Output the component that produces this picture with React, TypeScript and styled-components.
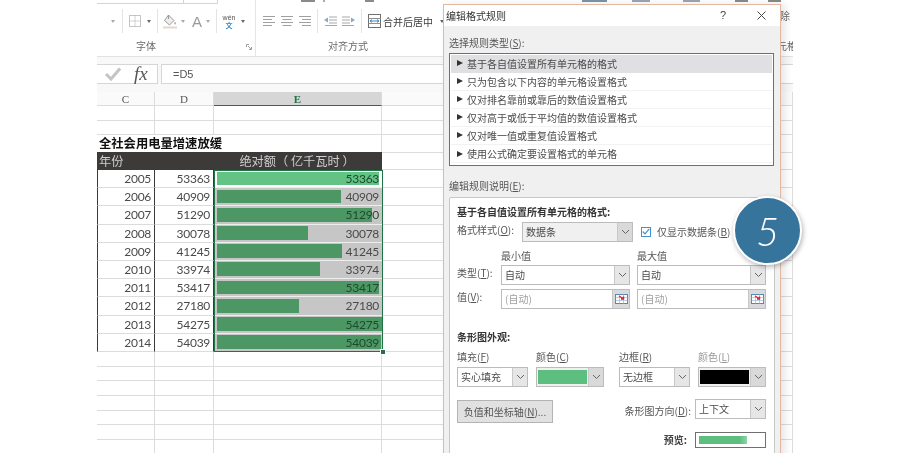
import React from "react";
import styled, { createGlobalStyle } from "styled-components";

const GlobalStyle = createGlobalStyle`
    html, body {
        margin: 0;
        padding: 0;
        background: #fff;
    }
    * {
        box-sizing: border-box;
    }
`;

const CJK = `"Noto Sans CJK SC", "Liberation Sans", sans-serif`;

const Page = styled.div`
    width: 900px;
    height: 453px;
    position: relative;
    overflow: hidden;
    background: #fff;
    padding-left: 97px;
    font-family: ${CJK};
    color: #444;
    filter: blur(0.25px);
`;
const Excel = styled.div`
    width: 696px;
    height: 453px;
    display: flex;
    flex-direction: column;
    overflow: hidden;
`;

/* ribbon */
const Ribbon = styled.div`
    height: 56.5px;
    flex: none;
    display: flex;
    border-bottom: 1.5px solid #e2e2e2;
    background: #fff;
`;
const Group = styled.div<{ $w: number; $line?: boolean }>`
    width: ${(p) => p.$w}px;
    flex: none;
    position: relative;
    display: flex;
    flex-direction: column;
    border-right: ${(p) => (p.$line ? "1px solid #e6e6e6" : "none")};
`;
const TopStrip = styled.div`
    height: 5px;
    flex: none;
    display: flex;
    align-items: flex-start;
    overflow: hidden;
`;
const ComboStub = styled.div<{ $w: number }>`
    width: ${(p) => p.$w}px;
    height: 4px;
    border-bottom: 1px solid #d4d4d4;
    border-right: 1px solid #d4d4d4;
`;
const StubMark = styled.div<{ $ml: number; $w: number; $c?: string }>`
    margin-left: ${(p) => p.$ml}px;
    width: ${(p) => p.$w}px;
    height: 2px;
    background: ${(p) => p.$c ?? "#8a8a8a"};
`;
const IconRow = styled.div`
    height: 32px;
    flex: none;
    display: flex;
    align-items: center;
`;
const GroupLabel = styled.div<{ $pr: number }>`
    height: 18px;
    line-height: 18px;
    padding-right: ${(p) => p.$pr}px;
    font-size: 10px;
    text-align: center;
    color: #6a6a6a;
`;
const Tool = styled.div<{ $ml?: number }>`
    margin-left: ${(p) => p.$ml ?? 0}px;
    display: flex;
    align-items: center;
    flex: none;
`;
const Caret = styled.div<{ $ml: number; $c?: string }>`
    margin-left: ${(p) => p.$ml}px;
    flex: none;
    width: 0;
    height: 0;
    border-left: 2.5px solid transparent;
    border-right: 2.5px solid transparent;
    border-top: 3px solid ${(p) => p.$c ?? "#666"};
`;
const ToolSep = styled.div<{ $ml: number }>`
    margin-left: ${(p) => p.$ml}px;
    width: 1px;
    height: 24px;
    background: #e4e4e4;
    flex: none;
`;
const UnderlineU = styled.div`
    width: 8px;
    font: 13px "Liberation Sans", sans-serif;
    color: #8a8a8a;
    text-decoration: underline;
    line-height: 14px;
    margin-left: -1px;
`;
const LetterA = styled.div`
    font: 15px "Liberation Sans", sans-serif;
    color: #9a9a9a;
`;
const Phonetic = styled.div`
    width: 14px;
    display: flex;
    flex-direction: column;
    align-items: center;
    line-height: 8px;
`;
const PhoneticTop = styled.span`
    font: 7px "Liberation Sans", sans-serif;
    color: #555;
`;
const PhoneticBottom = styled.span`
    font-size: 7px;
    font-weight: 700;
    color: #3f86c4;
`;
const MergeText = styled.div`
    margin-left: 2px;
    font-size: 10px;
    color: #3c3c3c;
    white-space: nowrap;
`;
const Launcher = styled.div`
    position: absolute;
    right: 3px;
    bottom: 1px;
`;
const ClippedGroup = styled.div`
    margin-left: auto;
    width: 12px;
    flex: none;
    display: flex;
    flex-direction: column;
    align-items: flex-end;
    overflow: hidden;
    font-size: 10px;
    color: #666;
    white-space: nowrap;
`;
const ClippedTop = styled.div`
    margin-top: 9px;
    height: 14px;
    line-height: 14px;
    padding-right: 3px;
`;
const ClippedLabel = styled.div`
    margin-top: 16px;
    height: 14px;
    line-height: 14px;
    margin-right: -4px;
`;

/* formula bar */
const FormulaBar = styled.div`
    height: 35.5px;
    flex: none;
    display: flex;
    align-items: center;
    gap: 3px;
    padding-bottom: 1px;
    background: #f8f8f8;
`;
const FxBox = styled.div`
    width: 61px;
    height: 20px;
    flex: none;
    display: flex;
    align-items: center;
    padding-left: 8px;
    background: #fff;
    border: 1px solid #d6d6d6;
    border-left: none;
`;
const FxText = styled.span`
    margin-left: 13px;
    font: italic 400 19px "Liberation Serif", serif;
    line-height: 18px;
    color: #555;
`;
const FormulaInput = styled.div`
    flex: 1;
    height: 20px;
    display: flex;
    align-items: center;
    padding-left: 11px;
    background: #fff;
    border: 1px solid #d6d6d6;
    border-right: none;
    font: 11px "Liberation Sans", sans-serif;
    color: #555;
`;

/* sheet */
const COLUMNS = "58px 59px 168px 1fr";
const Sheet = styled.div`
    flex: 1;
    display: flex;
    flex-direction: column;
`;
const HeaderRow = styled.div`
    height: 14px;
    flex: none;
    display: grid;
    grid-template-columns: ${COLUMNS};
    background: #fafafa;
`;
const ColHead = styled.div<{ $active?: boolean }>`
    display: flex;
    align-items: center;
    justify-content: center;
    font: ${(p) => (p.$active ? 700 : 400)} 11px "Liberation Serif", serif;
    color: ${(p) => (p.$active ? "#217346" : "#555")};
    background: ${(p) => (p.$active ? "#d6d6d6" : "transparent")};
    border-right: 1px solid #dcdcdc;
    border-bottom: ${(p) => (p.$active ? "1.5px solid #217346" : "1px solid #dcdcdc")};
`;
const Row = styled.div<{ $h: number }>`
    height: ${(p) => p.$h}px;
    flex: none;
    display: grid;
    grid-template-columns: ${COLUMNS};
`;
const Cell = styled.div`
    border-right: 1px solid #dcdcdc;
    border-bottom: 1px solid #dcdcdc;
`;
const TitleCell = styled.div`
    grid-column: 1 / 4;
    padding-left: 2px;
    font-size: 12.3px;
    line-height: 17px;
    font-weight: 700;
    color: #111;
    white-space: nowrap;
    border-right: 1px solid #dcdcdc;
    border-bottom: 1px solid #dcdcdc;
`;
const DarkCell = styled.div<{ $center?: boolean; $span: string }>`
    grid-column: ${(p) => p.$span};
    background: #3d3a3a;
    color: #cfcfcf;
    font-size: 12.2px;
    line-height: 18px;
    padding-left: ${(p) => (p.$center ? 0 : 2)}px;
    padding-right: ${(p) => (p.$center ? 2 : 0)}px;
    text-align: ${(p) => (p.$center ? "center" : "left")};
    white-space: nowrap;
`;
const DataBlock = styled.div`
    position: relative;
    flex: none;
`;
const NumCell = styled.div<{ $left?: boolean }>`
    display: flex;
    align-items: center;
    justify-content: flex-end;
    padding-right: 3px;
    font: 12px Lato, "Liberation Sans", sans-serif;
    letter-spacing: -0.28px;
    color: #4a4a4a;
    border-left: ${(p) => (p.$left ? "1px solid #3a3a3a" : "none")};
    border-right: 1px solid #3a3a3a;
    border-bottom: 1px solid #dcdcdc;
`;
const ValueCell = styled.div<{ $first?: boolean }>`
    position: relative;
    display: flex;
    align-items: center;
    justify-content: flex-end;
    padding-right: 3px;
    font: 12px Lato, "Liberation Sans", sans-serif;
    letter-spacing: -0.28px;
    background: ${(p) => (p.$first ? "#fff" : "#c6c6c6")};
    border-bottom: 1px solid #eee;
`;
const Bar = styled.div<{ $first?: boolean }>`
    position: absolute;
    left: 2.5px;
    top: 1.5px;
    bottom: 2px;
    background: ${(p) => (p.$first ? "#62c384" : "#4d9765")};
`;
const ValueText = styled.span<{ $over: boolean }>`
    position: relative;
    color: ${(p) => (p.$over ? "#1e4a2e" : "#4a4a4a")};
`;
const Selection = styled.div`
    position: absolute;
    left: 117px;
    top: 0;
    bottom: 0;
    width: 168.5px;
    border: 1.5px solid #217346;
    pointer-events: none;
`;
const FillHandle = styled.div`
    position: absolute;
    right: -4px;
    bottom: -4px;
    width: 6px;
    height: 6px;
    background: #217346;
    border: 1px solid #fff;
`;

/* dialog */
const Dialog = styled.div`
    position: absolute;
    left: 443px;
    top: 3.5px;
    width: 338px;
    height: 470px;
    display: flex;
    flex-direction: column;
    background: #f0f0f0;
    border: 1.5px solid #e3b8a2;
    box-shadow: 4px 0 8px rgba(0, 0, 0, 0.1);
    font-size: 10px;
    color: #444;
`;
const TitleBar = styled.div`
    height: 21px;
    flex: none;
    display: flex;
    align-items: center;
    padding: 0 14px 0 2px;
    background: #fff;
    font-size: 10px;
    color: #333;
`;
const TitleText = styled.span`
    flex: 1;
`;
const HelpMark = styled.span`
    margin-right: 31px;
    font: 11px "Liberation Sans", sans-serif;
    color: #444;
`;
const DialogBody = styled.div`
    flex: 1;
    padding: 10px 0 0 5px;
    display: flex;
    flex-direction: column;
`;
const SectionLabel = styled.div`
    height: 14px;
    line-height: 14px;
    font-size: 10px;
    color: #555;
    white-space: nowrap;
`;
const ListBox = styled.div`
    margin-top: 3px;
    width: 325px;
    height: 113px;
    flex: none;
    padding: 1px;
    background: #fff;
    border: 1.5px solid #6f6f6f;
`;
const ListItem = styled.div<{ $active?: boolean }>`
    height: 18.1px;
    display: flex;
    align-items: center;
    background: ${(p) => (p.$active ? "#e0e0e3" : "#fff")};
    border-bottom: 1px solid ${(p) => (p.$active ? "#e0e0e3" : "#f2f2f2")};
    color: #4a4a4a;
    white-space: nowrap;
`;
const ListArrow = styled.span`
    margin: 0 4px 0 6px;
    width: 0;
    height: 0;
    border-top: 3.5px solid transparent;
    border-bottom: 3.5px solid transparent;
    border-left: 6px solid #333;
    flex: none;
`;
const DescLabel = styled(SectionLabel)`
    margin-top: 13px;
`;
const DescBox = styled.div`
    margin-top: 4px;
    width: 326px;
    height: 300px;
    flex: none;
    padding: 8px 0 0 7px;
    background: #fff;
    border: 1px solid #c8c8c8;
    border-radius: 2px 2px 0 0;
`;
const Heading = styled.div<{ $mt?: number }>`
    margin-top: ${(p) => p.$mt ?? 0}px;
    height: 12px;
    line-height: 12px;
    font-weight: 700;
    color: #333;
    white-space: nowrap;
`;
const StyleRow = styled.div`
    margin-top: 4px;
    height: 20px;
    display: flex;
    align-items: flex-start;
`;
const Label = styled.span<{ $w?: number; $muted?: boolean }>`
    ${(p) => (p.$w ? `width: ${p.$w}px; flex: none;` : "")}
    color: ${(p) => (p.$muted ? "#999" : "#555")};
    line-height: 16px;
    white-space: nowrap;
`;
const Key = styled.span`
    text-decoration: underline;
`;
const SelectBox = styled.div<{ $w: number; $tone?: "grey" | "white" }>`
    width: ${(p) => p.$w}px;
    height: 20px;
    flex: none;
    display: flex;
    align-items: stretch;
    background: ${(p) => (p.$tone === "grey" ? "#f0f0f0" : "#fff")};
    border: 1px solid #bcbcbc;
`;
const SelectText = styled.span<{ $muted?: boolean }>`
    flex: 1;
    padding-left: 3px;
    line-height: 17px;
    color: ${(p) => (p.$muted ? "#a0a0a0" : "#4a4a4a")};
    white-space: nowrap;
`;
const SelectArrow = styled.span<{ $dark?: boolean }>`
    width: 15px;
    flex: none;
    display: flex;
    align-items: center;
    justify-content: center;
    background: ${(p) => (p.$dark ? "#d9d9d9" : "#e6e6e6")};
    border-left: 1px solid #c8c8c8;
`;
const RefButton = styled.span`
    width: 17px;
    flex: none;
    display: flex;
    align-items: center;
    justify-content: center;
    background: #d8dadd;
    border-left: 1px solid #c8c8c8;
`;
const CheckItem = styled.div`
    margin-left: 8px;
    margin-top: 2px;
    display: flex;
    align-items: center;
    gap: 6px;
    color: #555;
`;
const CheckBox = styled.span`
    width: 10px;
    height: 10px;
    flex: none;
    display: flex;
    align-items: center;
    justify-content: center;
    background: #fff;
    border: 1px solid #4a90c8;
`;
const RangeHead = styled.div`
    margin-top: 8px;
    margin-left: 44px;
    height: 15px;
    display: flex;
    gap: 7px;
`;
const RangeTitle = styled.span`
    width: 129px;
    line-height: 12px;
    color: #555;
`;
const RangeRow = styled.div<{ $mt: number }>`
    margin-top: ${(p) => p.$mt}px;
    height: 20px;
    display: flex;
    align-items: flex-start;
`;
const RangeFields = styled.div`
    display: flex;
    gap: 7px;
`;
const BarGrid = styled.div<{ $mt: number }>`
    margin-top: ${(p) => p.$mt}px;
    display: grid;
    grid-template-columns: 79px 83px 79px 68px;
    width: 309px;
`;
const Swatch = styled.span<{ $c: string }>`
    flex: 1;
    margin: 2px 1px 2px 1px;
    background: ${(p) => p.$c};
`;
const ActionRow = styled.div`
    margin-top: 12px;
    width: 309px;
    display: flex;
    align-items: flex-start;
    justify-content: space-between;
`;
const PlainButton = styled.div`
    width: 96px;
    height: 23px;
    margin-top: 1px;
    display: flex;
    align-items: center;
    justify-content: center;
    background: #e1e1e1;
    border: 1px solid #b4b4b4;
    color: #555;
    white-space: nowrap;
`;
const DirectionGroup = styled.div`
    display: flex;
    align-items: flex-start;
    gap: 4px;
`;
const DirectionLabel = styled(Label)`
    line-height: 24px;
`;
const PreviewRow = styled.div`
    margin-top: 9px;
    width: 309px;
    display: flex;
    justify-content: flex-end;
    align-items: center;
    gap: 8px;
`;
const PreviewLabel = styled.span`
    font-weight: 700;
    color: #444;
`;
const PreviewBox = styled.div`
    width: 71px;
    height: 16px;
    padding: 3px;
    background: #fff;
    border: 1px solid #707070;
`;
const PreviewBar = styled.div`
    width: 48px;
    height: 100%;
    background: linear-gradient(to right, #5cbf80 85%, #8fd4a8);
`;

/* step badge */
const Badge = styled.div`
    position: absolute;
    left: 733px;
    top: 196px;
    width: 69px;
    height: 69px;
    display: flex;
    align-items: center;
    justify-content: center;
    border-radius: 50%;
    background: #37749b;
    border: 2px solid #fff;
    box-shadow: 1px 2px 5px rgba(0, 0, 0, 0.3);
    font: italic 300 40px Lato, "Liberation Sans", sans-serif;
    color: #fff;
`;

const Chevron = () => (
    <svg width="9" height="6" viewBox="0 0 9 6">
        <path d="M1 1 L4.5 4.5 L8 1" fill="none" stroke="#666" strokeWidth="1" />
    </svg>
);

const RefIcon = () => (
    <svg width="13" height="12" viewBox="0 0 13 12">
        <rect x="0.5" y="1.5" width="12" height="9" fill="#fff" stroke="#5a86b4" />
        <path d="M0.5 4.5 H12.5 M0.5 7.5 H12.5 M4.5 1.5 V10.5 M8.5 1.5 V10.5" stroke="#9db9d6" strokeWidth="0.7" />
        <path d="M4 3 L8 5.5 M8.5 3.5 V6 H6" fill="none" stroke="#d8262c" strokeWidth="1.4" />
    </svg>
);

const CheckIcon = () => (
    <svg width="8" height="7" viewBox="0 0 8 7">
        <path d="M0.7 3.5 L3 5.8 L7.3 0.8" fill="none" stroke="#4a90c8" strokeWidth="1.2" />
    </svg>
);

const BorderIcon = () => (
    <svg width="12" height="12" viewBox="0 0 12 12">
        <rect x="0.5" y="0.5" width="11" height="11" fill="none" stroke="#8c8c8c" strokeDasharray="1 1" />
        <path d="M6 0.5 V11.5 M0.5 6 H11.5" stroke="#a8a8a8" strokeDasharray="1 1" />
    </svg>
);

const BucketIcon = () => (
    <svg width="14" height="15" viewBox="0 0 14 15">
        <path d="M5.5 1 L11 6.5 L6.5 11 L1.5 6.5 Z" fill="#eee" stroke="#9a9a9a" />
        <path d="M5.5 1 V5" stroke="#9a9a9a" />
        <path d="M12 7.5 Q13.6 10 12 10.5 Q10.6 10 12 7.5 Z" fill="#999" />
        <rect x="0" y="12.5" width="14" height="2" fill="#e8d4d4" />
    </svg>
);

const AlignIcon = ({ kind }: { kind: "left" | "center" | "right" }) => {
    const lines = [
        [12, 7],
        [12, 9],
        [12, 7],
        [12, 9],
    ];
    return (
        <svg width="12" height="10" viewBox="0 0 12 10">
            {lines.map(([full, short], i) => {
                const w = i % 2 === 0 ? full : short;
                const x = kind === "left" ? 0 : kind === "right" ? 12 - w : (12 - w) / 2;
                return <rect key={i} x={x} y={i * 3} width={w} height="1" fill="#a0a0a0" />;
            })}
        </svg>
    );
};

const IndentIcon = ({ flip }: { flip?: boolean }) => (
    <svg width="13" height="10" viewBox="0 0 13 10" style={flip ? { transform: "scaleX(-1)" } : undefined}>
        <path d="M5 1 H13 M5 4 H13 M5 7 H13 M1 9.5 H13" stroke="#a8a8a8" strokeWidth="1" fill="none" />
        <path d="M0 4 L4 1.5 V6.5 Z" fill="#8fa8c0" />
    </svg>
);

const MergeIcon = () => (
    <svg width="13" height="14" viewBox="0 0 13 14">
        <rect x="0.5" y="0.5" width="12" height="13" fill="#fff" stroke="#707070" />
        <path d="M0.5 4.5 H12.5 M0.5 9.5 H12.5" stroke="#909090" />
        <path d="M2 7 H11 M2 7 L4 5.6 M2 7 L4 8.4 M11 7 L9 5.6 M11 7 L9 8.4" stroke="#3f86c4" fill="none" />
    </svg>
);

const LauncherIcon = () => (
    <svg width="6" height="6" viewBox="0 0 6 6">
        <path d="M0.5 3 V0.5 H3 M5.5 5.5 L2 2 M5.5 3 V5.5 H3" fill="none" stroke="#a0a0a0" />
    </svg>
);

const Tick = () => (
    <svg width="16" height="14" viewBox="0 0 16 14">
        <path d="M1 7 L6 12 L15 1.5" fill="none" stroke="#c4c4c4" strokeWidth="3" />
    </svg>
);

const CloseIcon = () => (
    <svg width="9" height="9" viewBox="0 0 9 9">
        <path d="M0.5 0.5 L8.5 8.5 M8.5 0.5 L0.5 8.5" stroke="#444" strokeWidth="1" />
    </svg>
);

const DATA = [
    { year: 2005, value: 53363 },
    { year: 2006, value: 40909 },
    { year: 2007, value: 51290 },
    { year: 2008, value: 30078 },
    { year: 2009, value: 41245 },
    { year: 2010, value: 33974 },
    { year: 2011, value: 53417 },
    { year: 2012, value: 27180 },
    { year: 2013, value: 54275 },
    { year: 2014, value: 54039 },
];
const MAX = 54275;
const BAR_FULL = 165;

const RULES = [
    "基于各自值设置所有单元格的格式",
    "只为包含以下内容的单元格设置格式",
    "仅对排名靠前或靠后的数值设置格式",
    "仅对高于或低于平均值的数值设置格式",
    "仅对唯一值或重复值设置格式",
    "使用公式确定要设置格式的单元格",
];

const BlankRow = ({ h }: { h: number }) => (
    <Row $h={h}>
        <Cell />
        <Cell />
        <Cell />
        <Cell />
    </Row>
);

const Select = ({ w, text, tone, darkArrow }: { w: number; text: string; tone?: "grey" | "white"; darkArrow?: boolean }) => (
    <SelectBox $w={w} $tone={tone}>
        <SelectText>{text}</SelectText>
        <SelectArrow $dark={darkArrow}>
            <Chevron />
        </SelectArrow>
    </SelectBox>
);

const App: React.FunctionComponent = () => {
    return (
        <Page>
            <GlobalStyle />
            <Excel>
                <Ribbon>
                    <Group $w={159} $line>
                        <TopStrip>
                            <ComboStub $w={87} />
                            <ComboStub $w={34} />
                        </TopStrip>
                        <IconRow>
                            <UnderlineU />
                            <Caret $ml={7} $c="#aaa" />
                            <ToolSep $ml={7} />
                            <Tool $ml={6}>
                                <BorderIcon />
                            </Tool>
                            <Caret $ml={6} />
                            <ToolSep $ml={6} />
                            <Tool $ml={5}>
                                <BucketIcon />
                            </Tool>
                            <Caret $ml={4} $c="#aaa" />
                            <Tool $ml={7}>
                                <LetterA>A</LetterA>
                            </Tool>
                            <Caret $ml={4} $c="#aaa" />
                            <ToolSep $ml={6} />
                            <Tool $ml={5}>
                                <Phonetic>
                                    <PhoneticTop>wén</PhoneticTop>
                                    <PhoneticBottom>文</PhoneticBottom>
                                </Phonetic>
                            </Tool>
                            <Caret $ml={5} />
                        </IconRow>
                        <GroupLabel $pr={60}>字体</GroupLabel>
                        <Launcher>
                            <LauncherIcon />
                        </Launcher>
                    </Group>
                    <Group $w={190}>
                        <TopStrip>
                            <StubMark $ml={45} $w={14} />
                            <StubMark $ml={8} $w={2} $c="#aaa" />
                            <StubMark $ml={40} $w={9} />
                        </TopStrip>
                        <IconRow>
                            <Tool $ml={7}>
                                <AlignIcon kind="left" />
                            </Tool>
                            <Tool $ml={6}>
                                <AlignIcon kind="center" />
                            </Tool>
                            <Tool $ml={6}>
                                <AlignIcon kind="right" />
                            </Tool>
                            <ToolSep $ml={6} />
                            <Tool $ml={6}>
                                <IndentIcon />
                            </Tool>
                            <Tool $ml={5}>
                                <IndentIcon flip />
                            </Tool>
                            <ToolSep $ml={6} />
                            <Tool $ml={6}>
                                <MergeIcon />
                            </Tool>
                            <MergeText>合并后居中</MergeText>
                            <Caret $ml={7} />
                        </IconRow>
                        <GroupLabel $pr={6}>对齐方式</GroupLabel>
                    </Group>
                    <Group $w={335}>
                        <TopStrip>
                            <StubMark $ml={136} $w={25} $c="#7f93a8" />
                            <StubMark $ml={25} $w={18} $c="#9aa6b2" />
                            <StubMark $ml={33} $w={17} $c="#9aa6b2" />
                            <StubMark $ml={35} $w={13} />
                            <StubMark $ml={20} $w={13} />
                        </TopStrip>
                    </Group>
                    <ClippedGroup>
                        <ClippedTop>除</ClippedTop>
                        <ClippedLabel>元格</ClippedLabel>
                    </ClippedGroup>
                </Ribbon>
                <FormulaBar>
                    <FxBox>
                        <Tick />
                        <FxText>fx</FxText>
                    </FxBox>
                    <FormulaInput>=D5</FormulaInput>
                </FormulaBar>
                <Sheet>
                    <HeaderRow>
                        <ColHead>C</ColHead>
                        <ColHead>D</ColHead>
                        <ColHead $active>E</ColHead>
                        <ColHead>F</ColHead>
                    </HeaderRow>
                    <BlankRow h={15} />
                    <BlankRow h={14} />
                    <Row $h={17}>
                        <TitleCell>全社会用电量增速放缓</TitleCell>
                        <Cell />
                    </Row>
                    <Row $h={18}>
                        <DarkCell $span="1 / 3">年份</DarkCell>
                        <DarkCell $span="3 / 4" $center>
                            绝对额（ 亿千瓦时 ）
                        </DarkCell>
                        <Cell />
                    </Row>
                    <DataBlock>
                        {DATA.map((d, i) => {
                            const width = (d.value / MAX) * BAR_FULL;
                            return (
                                <Row $h={18.2} key={d.year}>
                                    <NumCell $left>{d.year}</NumCell>
                                    <NumCell>{d.value}</NumCell>
                                    <ValueCell $first={i === 0}>
                                        <Bar $first={i === 0} style={{ width }} />
                                        <ValueText $over={width > 155}>{d.value}</ValueText>
                                    </ValueCell>
                                    <Cell />
                                </Row>
                            );
                        })}
                        <Selection>
                            <FillHandle />
                        </Selection>
                    </DataBlock>
                    {[0, 1, 2, 3, 4, 5, 6].map((i) => (
                        <BlankRow h={14.7} key={i} />
                    ))}
                </Sheet>
            </Excel>

            <Dialog>
                <TitleBar>
                    <TitleText>编辑格式规则</TitleText>
                    <HelpMark>?</HelpMark>
                    <CloseIcon />
                </TitleBar>
                <DialogBody>
                    <SectionLabel>
                        选择规则类型(<Key>S</Key>):
                    </SectionLabel>
                    <ListBox>
                        {RULES.map((r, i) => (
                            <ListItem $active={i === 0} key={r}>
                                <ListArrow />
                                {r}
                            </ListItem>
                        ))}
                    </ListBox>
                    <DescLabel>
                        编辑规则说明(<Key>E</Key>):
                    </DescLabel>
                    <DescBox>
                        <Heading>基于各自值设置所有单元格的格式:</Heading>
                        <StyleRow>
                            <Label $w={65}>
                                格式样式(<Key>O</Key>):
                            </Label>
                            <Select w={111} text="数据条" tone="grey" darkArrow />
                            <CheckItem>
                                <CheckBox>
                                    <CheckIcon />
                                </CheckBox>
                                <Label>
                                    仅显示数据条(<Key>B</Key>)
                                </Label>
                            </CheckItem>
                        </StyleRow>
                        <RangeHead>
                            <RangeTitle>最小值</RangeTitle>
                            <RangeTitle>最大值</RangeTitle>
                        </RangeHead>
                        <RangeRow $mt={0}>
                            <Label $w={44}>
                                类型(<Key>T</Key>):
                            </Label>
                            <RangeFields>
                                <Select w={129} text="自动" />
                                <Select w={129} text="自动" />
                            </RangeFields>
                        </RangeRow>
                        <RangeRow $mt={4}>
                            <Label $w={44}>
                                值(<Key>V</Key>):
                            </Label>
                            <RangeFields>
                                <SelectBox $w={129}>
                                    <SelectText $muted>(自动)</SelectText>
                                    <RefButton>
                                        <RefIcon />
                                    </RefButton>
                                </SelectBox>
                                <SelectBox $w={129}>
                                    <SelectText $muted>(自动)</SelectText>
                                    <RefButton>
                                        <RefIcon />
                                    </RefButton>
                                </SelectBox>
                            </RangeFields>
                        </RangeRow>
                        <Heading $mt={22}>条形图外观:</Heading>
                        <BarGrid $mt={6}>
                            <Label>
                                填充(<Key>F</Key>)
                            </Label>
                            <Label>
                                颜色(<Key>C</Key>)
                            </Label>
                            <Label>
                                边框(<Key>R</Key>)
                            </Label>
                            <Label $muted>
                                颜色(<Key>L</Key>)
                            </Label>
                        </BarGrid>
                        <BarGrid $mt={2}>
                            <Select w={71} text="实心填充" />
                            <SelectBox $w={68} $tone="grey">
                                <Swatch $c="#5cbf80" />
                                <SelectArrow $dark>
                                    <Chevron />
                                </SelectArrow>
                            </SelectBox>
                            <Select w={71} text="无边框" />
                            <SelectBox $w={68} $tone="grey">
                                <Swatch $c="#000" />
                                <SelectArrow $dark>
                                    <Chevron />
                                </SelectArrow>
                            </SelectBox>
                        </BarGrid>
                        <ActionRow>
                            <PlainButton>
                                负值和坐标轴(<Key>N</Key>)...
                            </PlainButton>
                            <DirectionGroup>
                                <DirectionLabel>
                                    条形图方向(<Key>D</Key>):
                                </DirectionLabel>
                                <Select w={71} text="上下文" />
                            </DirectionGroup>
                        </ActionRow>
                        <PreviewRow>
                            <PreviewLabel>预览:</PreviewLabel>
                            <PreviewBox>
                                <PreviewBar />
                            </PreviewBox>
                        </PreviewRow>
                    </DescBox>
                </DialogBody>
            </Dialog>

            <Badge>5</Badge>
        </Page>
    );
};

export default App;
